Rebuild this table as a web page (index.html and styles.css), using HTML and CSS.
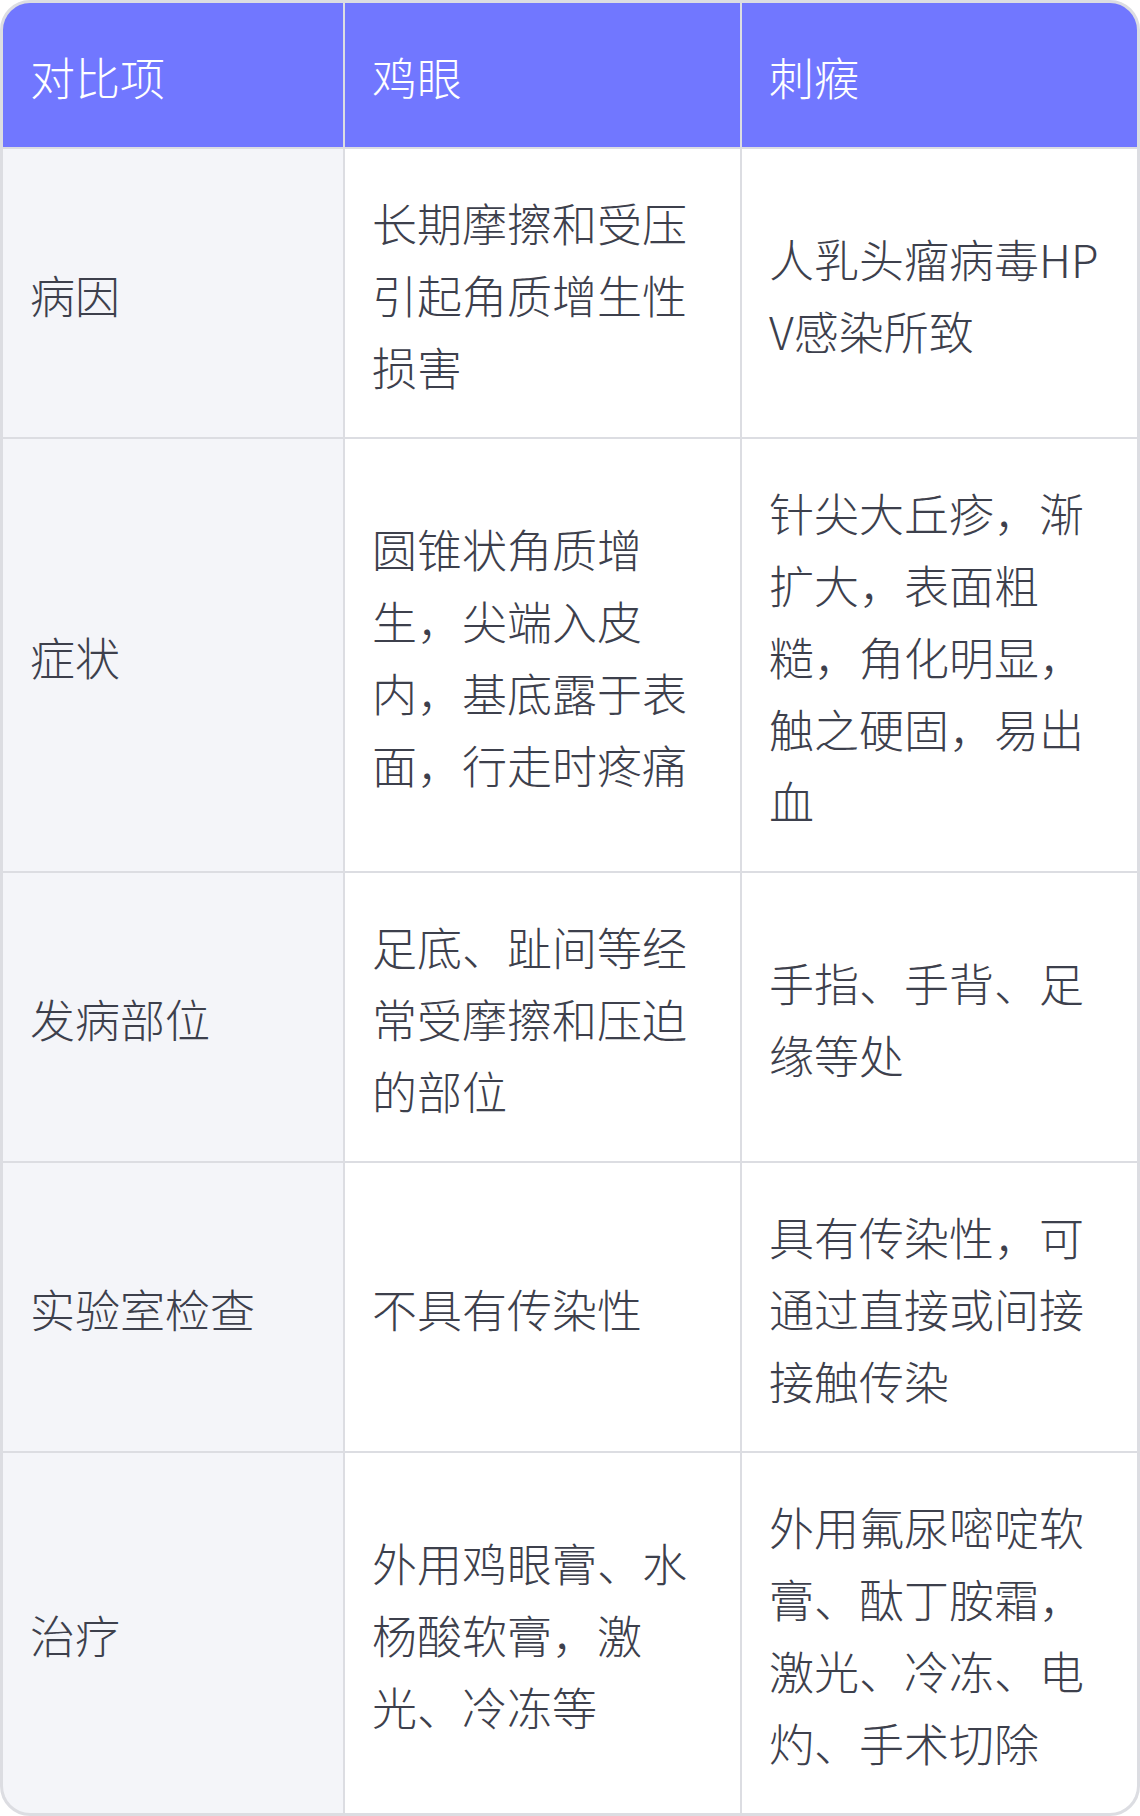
FILE: index.html
```html
<!DOCTYPE html>
<html lang="zh-CN">
<head>
<meta charset="utf-8">
<title>鸡眼与刺瘊对比</title>
<link rel="stylesheet" href="styles.css">
</head>
<body>
<div class="table-wrap">
  <div class="grid">
    <div class="cell head">对比项</div>
    <div class="cell head">鸡眼</div>
    <div class="cell head">刺瘊</div>

    <div class="cell label">病因</div>
    <div class="cell">长期摩擦和受压引起角质增生性损害</div>
    <div class="cell">人乳头瘤病毒HPV感染所致</div>

    <div class="cell label">症状</div>
    <div class="cell">圆锥状角质增生，尖端入皮内，基底露于表面，行走时疼痛</div>
    <div class="cell">针尖大丘疹，渐扩大，表面粗糙，角化明显，触之硬固，易出血</div>

    <div class="cell label">发病部位</div>
    <div class="cell">足底、趾间等经常受摩擦和压迫的部位</div>
    <div class="cell">手指、手背、足缘等处</div>

    <div class="cell label">实验室检查</div>
    <div class="cell">不具有传染性</div>
    <div class="cell">具有传染性，可通过直接或间接接触传染</div>

    <div class="cell label">治疗</div>
    <div class="cell">外用鸡眼膏、水杨酸软膏，激光、冷冻等</div>
    <div class="cell">外用氟尿嘧啶软膏、酞丁胺霜，激光、冷冻、电灼、手术切除</div>
  </div>
</div>
</body>
</html>
```

FILE: styles.css
```css
html, body {
  margin: 0;
  padding: 0;
  background: #ffffff;
}

body {
  font-family: "Noto Sans CJK SC", "Noto Sans", sans-serif;
  font-weight: 300;
  color: #3d404c;
}

.table-wrap {
  width: 1140px;
  height: 1816px;
  box-sizing: border-box;
  border: 3px solid #dcdde2;
  border-radius: 30px;
  overflow: hidden;
  background: #dcdde2;
}

.grid {
  display: grid;
  grid-template-columns: 340px 395px 395px;
  gap: 2px;
}

.cell {
  display: flex;
  align-items: center;
  padding: 38px 27px 34px;
  font-size: 45px;
  line-height: 72px;
  background: #ffffff;
  word-break: break-all;
}

.cell.head {
  background: #7177ff;
  color: #ffffff;
}

.cell.label {
  background: #f4f5f9;
}
```
